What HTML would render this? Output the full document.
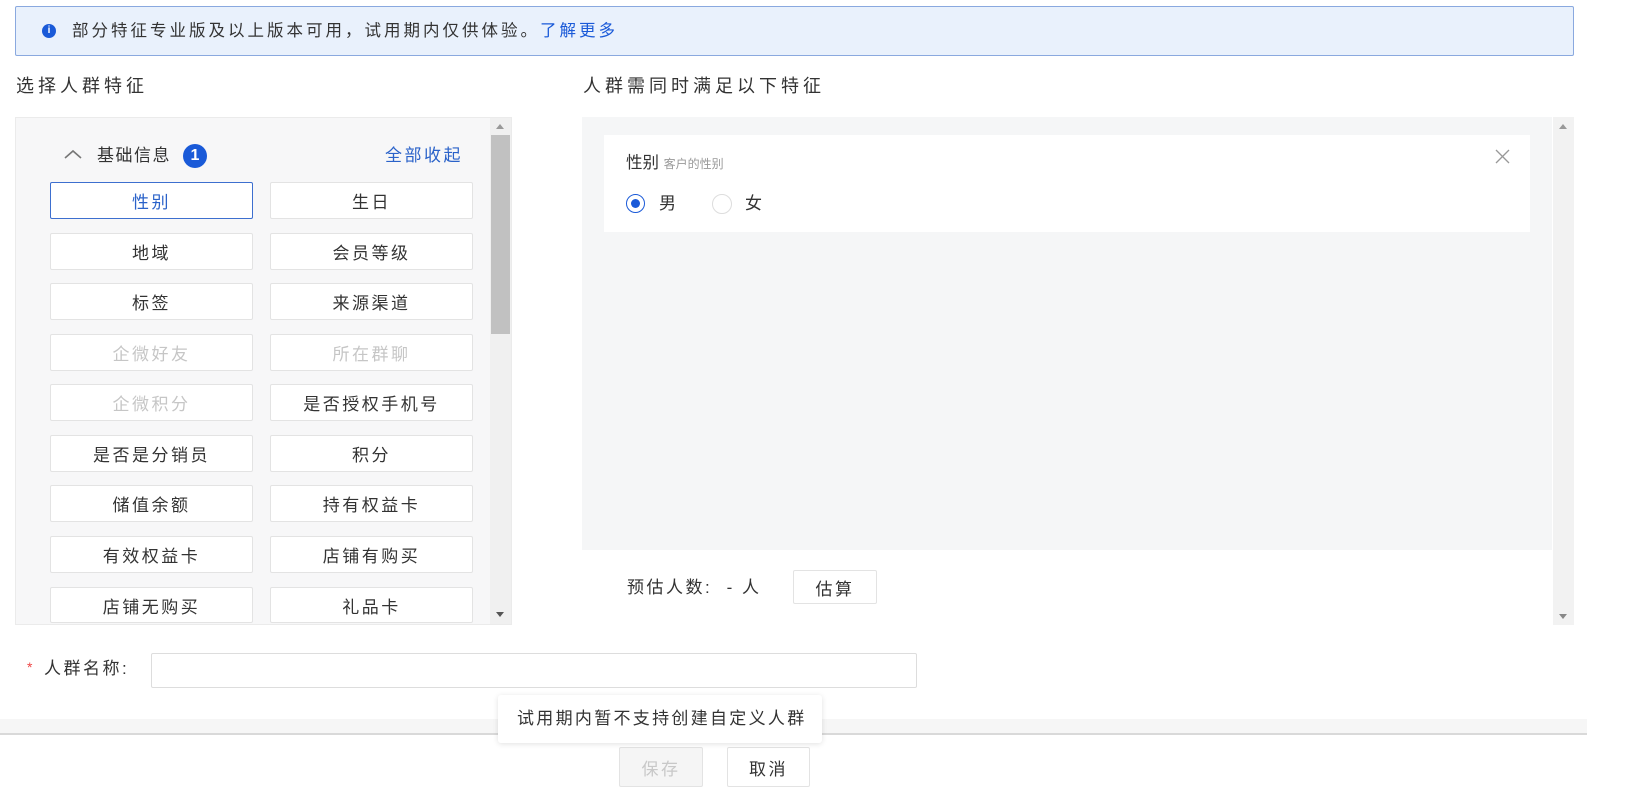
<!DOCTYPE html>
<html><head><meta charset="utf-8"><style>
*{margin:0;padding:0;box-sizing:border-box}
body{width:1626px;height:787px;overflow:hidden;background:#fff;font-family:"Liberation Sans","Noto Sans CJK SC",sans-serif;color:#333;position:relative}
.a{position:absolute}
.t{white-space:nowrap;line-height:1}
.btn{position:absolute;background:#fff;border:1px solid #e3e3e3;border-radius:2px;font-size:17px;letter-spacing:2.5px;display:flex;align-items:center;justify-content:center;color:#333}
.dis{color:#c6c6c6}
</style></head><body>
<div class="a" style="left:15px;top:6px;width:1559px;height:50px;background:#e9f1fc;border:1px solid #8aa9df;border-radius:2px"></div>
<div class="a" style="left:42px;top:24px;width:14px;height:14px;border-radius:50%;background:#1a5ad8;color:#fff;font-size:10px;font-weight:bold;text-align:center;line-height:14px">i</div>
<div class="a t" style="left:72px;top:23px;font-size:16.5px;letter-spacing:3px;color:#333">部分特征专业版及以上版本可用，试用期内仅供体验。<span style="color:#1a5ad8">了解更多</span></div>
<div class="a t" style="left:16px;top:77px;font-size:18px;letter-spacing:4px">选择人群特征</div>
<div class="a t" style="left:583px;top:77px;font-size:18px;letter-spacing:4px">人群需同时满足以下特征</div>
<!-- left panel -->
<div class="a" style="left:15px;top:117px;width:497px;height:508px;background:#f7f7f8;border:1px solid #ebebeb"></div>
<div class="a" style="left:490px;top:118px;width:21px;height:506px;background:#f0f0f0"></div>
<div class="a" style="left:491px;top:135px;width:19px;height:199px;background:#c1c1c1"></div>
<div class="a" style="left:496px;top:124px;border-left:4px solid transparent;border-right:4px solid transparent;border-bottom:5px solid #999"></div>
<div class="a" style="left:496px;top:612px;border-left:4px solid transparent;border-right:4px solid transparent;border-top:5px solid #555"></div>
<svg class="a" style="left:63px;top:148px" width="20" height="12"><path d="M2 10 L10 3 L18 10" fill="none" stroke="#777" stroke-width="1.6"/></svg>
<div class="a t" style="left:97px;top:147px;font-size:17px;letter-spacing:1.5px">基础信息</div>
<div class="a" style="left:183px;top:144px;width:24px;height:24px;border-radius:50%;background:#1a5ad8;color:#fff;font-size:16px;font-weight:bold;text-align:center;line-height:24px">1</div>
<div class="a t" style="left:385px;top:147px;font-size:17px;letter-spacing:2.5px;color:#2a62c9">全部收起</div>
<div class="btn" style="left:50px;top:182px;width:203px;height:37px;border-color:#3d6fcf;color:#2a62c9">性别</div>
<div class="btn" style="left:270px;top:182px;width:203px;height:37px">生日</div>
<div class="btn" style="left:50px;top:233px;width:203px;height:37px">地域</div>
<div class="btn" style="left:270px;top:233px;width:203px;height:37px">会员等级</div>
<div class="btn" style="left:50px;top:283px;width:203px;height:37px">标签</div>
<div class="btn" style="left:270px;top:283px;width:203px;height:37px">来源渠道</div>
<div class="btn dis" style="left:50px;top:334px;width:203px;height:37px">企微好友</div>
<div class="btn dis" style="left:270px;top:334px;width:203px;height:37px">所在群聊</div>
<div class="btn dis" style="left:50px;top:384px;width:203px;height:37px">企微积分</div>
<div class="btn" style="left:270px;top:384px;width:203px;height:37px">是否授权手机号</div>
<div class="btn" style="left:50px;top:435px;width:203px;height:37px">是否是分销员</div>
<div class="btn" style="left:270px;top:435px;width:203px;height:37px">积分</div>
<div class="btn" style="left:50px;top:485px;width:203px;height:37px">储值余额</div>
<div class="btn" style="left:270px;top:485px;width:203px;height:37px">持有权益卡</div>
<div class="btn" style="left:50px;top:536px;width:203px;height:37px">有效权益卡</div>
<div class="btn" style="left:270px;top:536px;width:203px;height:37px">店铺有购买</div>
<div class="btn" style="left:50px;top:587px;width:203px;height:36px">店铺无购买</div>
<div class="btn" style="left:270px;top:587px;width:203px;height:36px">礼品卡</div>
<!-- right panel -->
<div class="a" style="left:582px;top:117px;width:970px;height:433px;background:#f5f6f7"></div>
<div class="a" style="left:1553px;top:117px;width:21px;height:508px;background:#f2f2f2"></div>
<div class="a" style="left:1559px;top:124px;border-left:4px solid transparent;border-right:4px solid transparent;border-bottom:5px solid #999"></div>
<div class="a" style="left:1559px;top:614px;border-left:4px solid transparent;border-right:4px solid transparent;border-top:5px solid #888"></div>
<div class="a" style="left:604px;top:135px;width:926px;height:97px;background:#fff"></div>
<div class="a t" style="left:626px;top:155px;font-size:16.5px">性别 <span style="font-size:12px;color:#999">客户的性别</span></div>
<svg class="a" style="left:1495px;top:149px" width="15" height="15"><path d="M1 1L14 14M14 1L1 14" stroke="#999" stroke-width="1.3"/></svg>
<div class="a" style="left:626px;top:194px;width:19px;height:19px;border-radius:50%;border:1px solid #1a5ad8;background:#fff"></div>
<div class="a" style="left:631px;top:199px;width:9px;height:9px;border-radius:50%;background:#1a5ad8"></div>
<div class="a t" style="left:659px;top:195px;font-size:17px">男</div>
<div class="a" style="left:712px;top:194px;width:20px;height:20px;border-radius:50%;border:1px solid #ddd;background:#fff"></div>
<div class="a t" style="left:745px;top:195px;font-size:17px">女</div>
<div class="a t" style="left:627px;top:579px;font-size:17px;letter-spacing:2.5px">预估人数:&nbsp; - 人</div>
<div class="btn" style="left:793px;top:570px;width:84px;height:34px">估算</div>
<!-- name -->
<div class="a t" style="left:27px;top:660px;font-size:14px;color:#e44">*</div>
<div class="a t" style="left:44px;top:660px;font-size:17px;letter-spacing:2.5px">人群名称:</div>
<div class="a" style="left:151px;top:653px;width:766px;height:35px;border:1px solid #ddd;border-radius:2px;background:#fff"></div>
<!-- bottom -->
<div class="a" style="left:0;top:719px;width:1587px;height:15px;background:#f6f6f6"></div>
<div class="a" style="left:0;top:733px;width:1587px;height:2px;background:#d9d9d9"></div>
<div class="btn" style="left:619px;top:747px;width:84px;height:40px;background:#f5f5f5;color:#c8c8c8">保存</div>
<div class="btn" style="left:727px;top:747px;width:83px;height:40px">取消</div>
<div class="a" style="left:498px;top:695px;width:324px;height:48px;background:#fff;box-shadow:0 1px 6px rgba(0,0,0,.12);border-radius:3px"></div>
<div class="a t" style="left:517px;top:710px;font-size:17px;letter-spacing:2.3px">试用期内暂不支持创建自定义人群</div>
</body></html>
